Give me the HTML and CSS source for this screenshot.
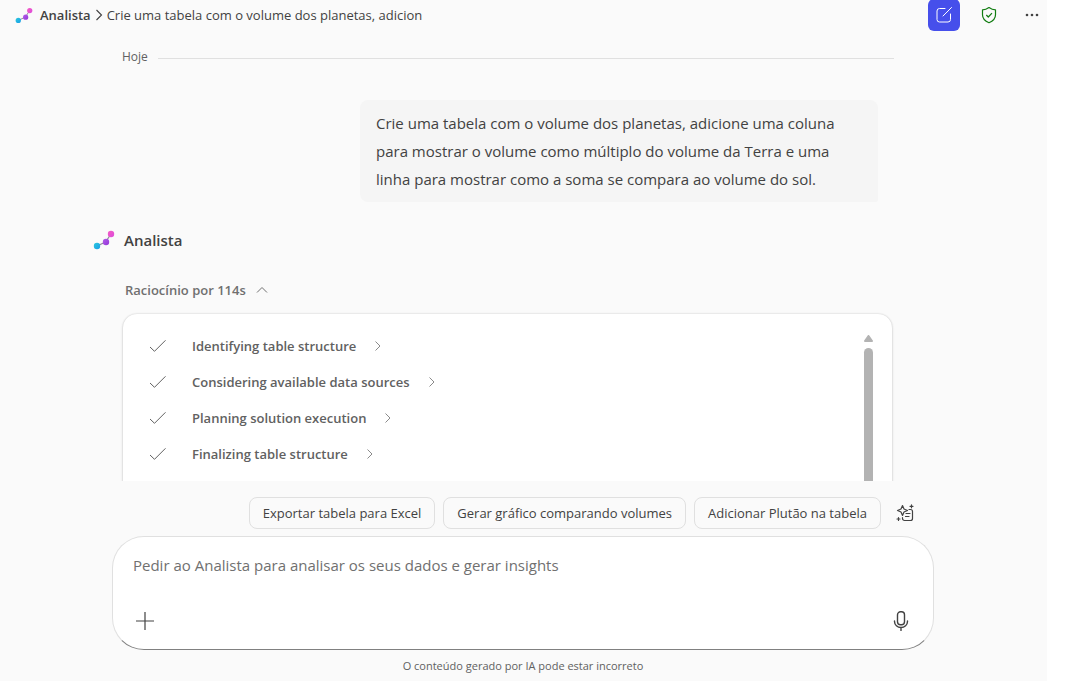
FILE: index.html
```html
<!DOCTYPE html>
<html lang="pt-BR">
<head>
<meta charset="utf-8">
<meta name="viewport" content="width=device-width, initial-scale=1">
<title>Analista</title>
<link rel="stylesheet" href="styles.css">
</head>
<body>
<svg class="defs" aria-hidden="true">
  <defs>
    <linearGradient id="cyan" x1="0" y1="0" x2="1" y2="1"><stop offset="0" stop-color="#2cc8dc"/><stop offset="1" stop-color="#189de8"/></linearGradient>
    <linearGradient id="purple" x1="0" y1="0" x2="1" y2="1"><stop offset="0" stop-color="#b35ce8"/><stop offset="1" stop-color="#9336d8"/></linearGradient>
    <linearGradient id="pink" x1="0" y1="0" x2="1" y2="1"><stop offset="0" stop-color="#f55bc4"/><stop offset="1" stop-color="#dc4bdb"/></linearGradient>
    <symbol id="logo" viewBox="0 0 22 20">
      <path d="M4 16 12.500 12 18 4" fill="none" stroke="#8f8a99" stroke-width="1.200"/>
      <circle cx="4" cy="16" r="3.200" fill="url(#cyan)"/>
      <circle cx="13" cy="12" r="3.200" fill="url(#purple)"/>
      <circle cx="18" cy="4" r="3.200" fill="url(#pink)"/>
    </symbol>
    <symbol id="check" viewBox="0 0 18 14"><path d="M1 8 5.500 12.300 16.500 1.300" fill="none" stroke="currentColor"/></symbol>
    <symbol id="chevron" viewBox="0 0 8 12"><path d="M1.500 1.500 6 6 1.500 10.500" fill="none" stroke="currentColor"/></symbol>
  </defs>
</svg>
<div class="app">
  <header class="topbar">
    <svg class="logo-small" aria-hidden="true"><use href="#logo"/></svg>
    <nav class="crumbs">
      <a class="agent" href="#">Analista</a>
      <svg class="crumb-arrow" viewBox="0 0 8 12" aria-hidden="true"><path d="M1.500 1 6.500 6 1.500 11" fill="none" stroke="currentColor" stroke-width="1.100"/></svg>
      <span>Crie uma tabela com o volume dos planetas, adicion</span>
    </nav>
    <div class="actions">
      <button class="icon-button compose" aria-label="Novo chat">
        <svg width="16" height="16" viewBox="0 0 16 16" fill="none" stroke="currentColor" stroke-linecap="round"><path d="M9 1.500H3.500a2.500 2.500 0 0 0-2.500 2.500v8.500a2.500 2.500 0 0 0 2.500 2.500H12a2.500 2.500 0 0 0 2.500-2.500V7M7 9l8.500-8.500"/></svg>
      </button>
      <button class="icon-button shield" aria-label="Protegido">
        <svg width="16" height="18" viewBox="0 0 16 18" fill="none" stroke="currentColor" stroke-width="1.200" stroke-linejoin="round"><path d="M8 1.500C10 3 12 3.800 14.500 3.800v5c0 3.700-2.300 6.300-6.500 7.900-4.200-1.600-6.500-4.200-6.500-7.900v-5C4 3.800 6 3 8 1.500Z"/><path d="m5.300 9 2 2L11 7.200"/></svg>
      </button>
      <button class="icon-button more" aria-label="Mais opções">
        <svg width="14" height="4" viewBox="0 0 14 4" fill="currentColor"><circle cx="2" cy="2" r="1.300"/><circle cx="7" cy="2" r="1.300"/><circle cx="12" cy="2" r="1.300"/></svg>
      </button>
    </div>
  </header>
  <main class="thread">
    <div class="column">
      <div class="day"><span>Hoje</span></div>
      <p class="prompt">Crie uma tabela com o volume dos planetas, adicione uma coluna para mostrar o volume como múltiplo do volume da Terra e uma linha para mostrar como a soma se compara ao volume do sol.</p>
      <h2 class="author"><svg class="logo-large" aria-hidden="true"><use href="#logo"/></svg>Analista</h2>
      <button class="reasoning">Raciocínio por 114s
        <svg width="12" height="8" viewBox="0 0 12 8" fill="none" stroke="currentColor"><path d="M1 6.500 6 1.500 11 6.500"/></svg>
      </button>
      <section class="steps">
        <ul class="step-list">
          <li><svg class="check" aria-hidden="true"><use href="#check"/></svg><button class="step">Identifying table structure<svg class="chevron" aria-hidden="true"><use href="#chevron"/></svg></button></li>
          <li><svg class="check" aria-hidden="true"><use href="#check"/></svg><button class="step">Considering available data sources<svg class="chevron" aria-hidden="true"><use href="#chevron"/></svg></button></li>
          <li><svg class="check" aria-hidden="true"><use href="#check"/></svg><button class="step">Planning solution execution<svg class="chevron" aria-hidden="true"><use href="#chevron"/></svg></button></li>
          <li><svg class="check" aria-hidden="true"><use href="#check"/></svg><button class="step">Finalizing table structure<svg class="chevron" aria-hidden="true"><use href="#chevron"/></svg></button></li>
        </ul>
        <div class="scrollbar" aria-hidden="true">
          <svg width="9" height="7" viewBox="0 0 9 7"><path d="M4.500 1 8 6H1Z" fill="#b3b3b3" stroke="#b3b3b3" stroke-width="2" stroke-linejoin="round"/></svg>
          <div class="thumb"></div>
        </div>
      </section>
    </div>
  </main>
  <footer class="dock">
    <div class="suggestions">
      <button class="chip">Exportar tabela para Excel</button>
      <button class="chip">Gerar gráfico comparando volumes</button>
      <button class="chip">Adicionar Plutão na tabela</button>
      <button class="icon-button" aria-label="Ver mais prompts">
        <svg width="18" height="18" viewBox="0 0 18 18" fill="none" stroke="currentColor" stroke-width="1.200" stroke-linejoin="round" stroke-linecap="round"><path d="M6.500 1.500 8 5l3.500 1.500L8 8l-1.500 3.500L5 8 1.500 6.500 5 5ZM13 5.500h1.500a2 2 0 0 1 2 2v7a2 2 0 0 1-2 2h-6a2 2 0 0 1-2-2v-1M10 9.500h4M9.500 12.500H13"/><path d="M15.500 .8v3M14 2.300h3M2.500 13.500v3M1 15h3"/></svg>
      </button>
    </div>
    <form class="composer">
      <textarea class="input" rows="1" aria-label="Mensagem" placeholder="Pedir ao Analista para analisar os seus dados e gerar insights"></textarea>
      <div class="tools">
        <button class="icon-button" type="button" aria-label="Adicionar conteúdo"><svg width="18" height="18" viewBox="0 0 18 18" fill="none" stroke="currentColor" stroke-width="1.200"><path d="M9 0v18M0 9h18"/></svg></button>
        <button class="icon-button" type="button" aria-label="Usar microfone"><svg width="16" height="20" viewBox="0 0 16 20" fill="none" stroke="currentColor" stroke-width="1.400" stroke-linecap="round"><rect x="4.500" y=".8" width="7" height="13" rx="3"/><path d="M1.500 10v.5a6.500 6 0 0 0 13 0V10M8 16.500v3"/></svg></button>
      </div>
    </form>
    <p class="notice">O conteúdo gerado por IA pode estar incorreto</p>
  </footer>
</div>
</body>
</html>
```

FILE: styles.css
```css
* { box-sizing: border-box; }
body { margin: 0; padding-right: 22px; background: #fff; color: #424242; font-family: "Open Sans", "Noto Sans", sans-serif; font-size: 14px; line-height: 20px; }
button, textarea { font: inherit; color: inherit; border: 0; background: none; padding: 0; margin: 0; }
p, h2, ul { margin: 0; padding: 0; }
svg { flex: none; }
.defs { display: block; width: 0; height: 0; }
.app { display: flex; flex-direction: column; height: 100vh; padding-right: 1px; background: #fafafa; overflow: hidden; }

.topbar { display: flex; align-items: center; height: 30px; flex: none; padding-left: 15px; }
.logo-small { width: 18px; height: 17px; margin-right: 7px; }
.crumbs { display: flex; align-items: center; flex: 1; min-width: 0; white-space: nowrap; font-size: 13px; }
.agent { color: inherit; font-weight: 600; text-decoration: none; }
.crumb-arrow { width: 8px; height: 12px; margin: 0 4px; }
.actions { display: flex; align-items: center; gap: 13px; }
.icon-button { display: flex; align-items: center; justify-content: center; flex: none; width: 32px; height: 32px; border-radius: 6px; }
.compose { background: #464feb; color: #fff; }
.shield { color: #107c10; }
.more { width: 28px; }

.thread { flex: 1; min-height: 0; overflow: hidden; padding-right: 28px; }
.column { display: flex; flex-direction: column; width: 100%; max-width: 832px; margin: 0 auto; padding: 17px 33px 0 30px; }
.day { display: flex; align-items: center; gap: 10px; color: #616161; font-size: 12px; margin: 0 -2px 0 -1px; }
.day::after { content: ""; flex: 1; height: 1px; margin-top: 3px; background: #e0e0e0; }
.prompt { align-self: flex-end; width: 518px; max-width: 100%; margin: 33px 14px 0 0; padding: 9px 16px; border-radius: 8px 8px 2px 8px; background: #f5f5f5; font-size: 15px; line-height: 28px; }
.author { display: flex; align-items: center; gap: 9px; margin: 28px 0 0 -30px; font-size: 15px; line-height: 20px; font-weight: 600; }
.logo-large { width: 22px; height: 20px; }
.reasoning { display: flex; align-items: center; align-self: flex-start; gap: 10px; margin-top: 30px; padding-left: 2px; color: #707070; font-size: 13px; font-weight: 600; }
.steps { display: flex; justify-content: space-between; height: 320px; margin-top: 14px; padding: 14px 19px 0 26px; border-radius: 14px; background: #fff; box-shadow: 0 0 2px rgba(0, 0, 0, .18), 0 1px 3px rgba(0, 0, 0, .12); }
.step-list { list-style: none; color: #616161; font-size: 13px; font-weight: 600; }
.step-list li { display: flex; align-items: center; gap: 25px; height: 36px; }
.check { width: 18px; height: 14px; }
.step { display: flex; align-items: center; gap: 18px; }
.chevron { width: 8px; height: 12px; color: #8a8a8a; }
.scrollbar { display: flex; flex-direction: column; gap: 6px; padding-top: 7px; }
.scrollbar svg { display: block; }
.thumb { flex: 1; width: 9px; border-radius: 5px; background: #b3b3b3; }

.dock { flex: none; width: 100%; max-width: 822px; margin: 0 auto; padding-top: 16px; }
.suggestions { display: flex; justify-content: flex-end; gap: 8px; padding-right: 13px; }
.chip { height: 32px; padding: 0 13px; border: 1px solid #e0e0e0; border-radius: 8px; font-size: 13px; white-space: nowrap; }
.composer { display: flex; flex-direction: column; height: 114px; margin-top: 7px; padding: 16px 16px 12px; border: 1px solid #e0e0e0; border-bottom-color: #808080; border-radius: 32px; background: #fff; }
.input { display: block; height: 24px; padding: 0 4px; resize: none; outline: 0; overflow: hidden; font-size: 15px; line-height: 24px; }
.input::placeholder { color: #707070; opacity: 1; }
.tools { display: flex; justify-content: space-between; margin-top: auto; }
.notice { padding: 6px 0 5px; text-align: center; font-size: 11px; color: #616161; }
```
